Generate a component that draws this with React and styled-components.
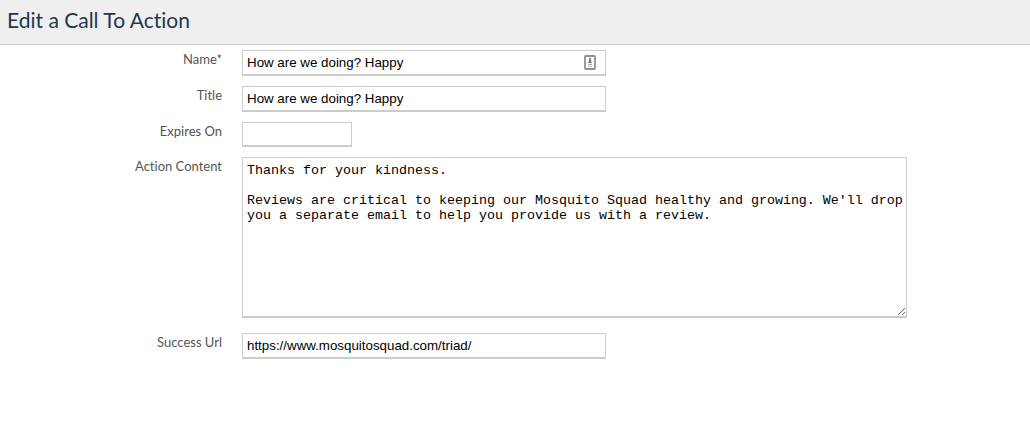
import React from "react";
import styled, { createGlobalStyle, css } from "styled-components";

const GlobalStyle = createGlobalStyle`
  *, *::before, *::after { box-sizing: border-box; }
  body {
    margin: 0;
    background: #fff;
    font-family: Lato, "Liberation Sans", sans-serif;
    font-variant-ligatures: none;
  }
`;

const Header = styled.header`
  padding: 6px 7px 10px;
  background: #efefef;
  border-bottom: 1px solid #ccc;
`;

const Heading = styled.h1`
  margin: 0;
  color: #22374d;
  font-size: 21px;
  line-height: 28px;
  font-weight: 400;
`;

const Form = styled.form`
  display: flex;
  flex-direction: column;
  gap: 10px;
  padding: 5px 0 24px;
`;

const Row = styled.div`
  display: grid;
  grid-template-columns: 222px minmax(0, 1fr);
  column-gap: 20px;
  align-items: start;
`;

const Label = styled.label`
  color: #555;
  font-size: 13px;
  line-height: 18px;
  text-align: right;
`;

const fieldStyle = css`
  display: block;
  max-width: 100%;
  margin: 0;
  border: 1px solid #ccc;
  border-bottom-width: 2px;
  border-radius: 0;
  background: #fff;
  color: #000;
  outline: none;
`;

const Input = styled.input`
  ${fieldStyle}
  width: ${(p) => (p.$short ? "110px" : "364px")};
  height: ${(p) => (p.$short ? "25px" : "26px")};
  padding: 0 4px;
  font-family: "Liberation Sans", Arial, sans-serif;
`;

const TextArea = styled.textarea`
  ${fieldStyle}
  width: 665px;
  height: 161px;
  margin-bottom: 5px;
  padding: 5px 2px 4px 4px;
  font-family: "Liberation Mono", "Courier New", monospace;
  line-height: 15px;
  resize: both;
`;

const InputWrap = styled.div`
  position: relative;
  width: 364px;
  max-width: 100%;
`;

const AutofillIcon = styled.svg`
  position: absolute;
  top: 5px;
  right: 10px;
  pointer-events: none;
`;

function ContactIcon() {
  return (
    <AutofillIcon width="12" height="16" viewBox="0 0 12 16" aria-hidden="true">
      <rect x="1" y="1" width="10" height="13" rx="1" fill="#fff" stroke="#8f8f8f" strokeWidth="1.8" />
      <path d="M5 3h2v2.5l1 2.5H4l1-2.5z" fill="#7d7d7d" />
      <path d="M4 9.5h4" stroke="#a8a8a8" strokeWidth="1.4" />
      <path d="M3.5 11.5h5" stroke="#cfcfcf" strokeWidth="1" />
    </AutofillIcon>
  );
}

export default function App() {
  return (
    <>
      <GlobalStyle />
      <Header>
        <Heading>Edit a Call To Action</Heading>
      </Header>
      <Form>
        <Row>
          <Label htmlFor="name">Name*</Label>
          <InputWrap>
            <Input id="name" type="text" defaultValue="How are we doing? Happy" />
            <ContactIcon />
          </InputWrap>
        </Row>
        <Row>
          <Label htmlFor="title">Title</Label>
          <Input id="title" type="text" defaultValue="How are we doing? Happy" />
        </Row>
        <Row>
          <Label htmlFor="expires">Expires On</Label>
          <Input id="expires" type="text" $short />
        </Row>
        <Row>
          <Label htmlFor="content">Action Content</Label>
          <TextArea
            id="content"
            spellCheck={false}
            defaultValue={
              "Thanks for your kindness.\n\nReviews are critical to keeping our Mosquito Squad healthy and growing. We'll drop you a separate email to help you provide us with a review."
            }
          />
        </Row>
        <Row>
          <Label htmlFor="url">Success Url</Label>
          <Input id="url" type="text" defaultValue="https://www.mosquitosquad.com/triad/" />
        </Row>
      </Form>
    </>
  );
}
